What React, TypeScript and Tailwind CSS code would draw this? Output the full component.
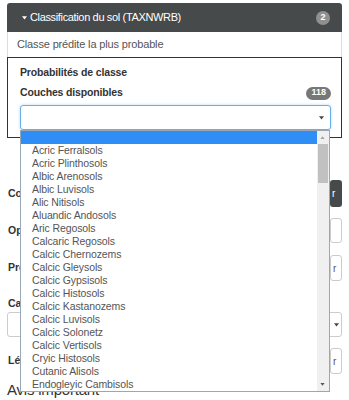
import React from "react";

const soils = [
  "",
  "Acric Ferralsols",
  "Acric Plinthosols",
  "Albic Arenosols",
  "Albic Luvisols",
  "Alic Nitisols",
  "Aluandic Andosols",
  "Aric Regosols",
  "Calcaric Regosols",
  "Calcic Chernozems",
  "Calcic Gleysols",
  "Calcic Gypsisols",
  "Calcic Histosols",
  "Calcic Kastanozems",
  "Calcic Luvisols",
  "Calcic Solonetz",
  "Calcic Vertisols",
  "Cryic Histosols",
  "Cutanic Alisols",
  "Endogleyic Cambisols",
];

const Caret: React.FC<{ className?: string }> = ({ className }) => (
  <svg width="7" height="5" viewBox="0 0 7 5" className={className}>
    <path d="M0 0 L7 0 L3.5 4.5 Z" fill="currentColor" />
  </svg>
);

const FieldBox: React.FC<{ children?: React.ReactNode; height: string }> = ({ children, height }) => (
  <div
    className={`w-[12px] ${height} border border-[#ccc] rounded-[3px] bg-white flex items-center text-[10px] text-[#555] overflow-hidden`}
  >
    {children}
  </div>
);

const App: React.FC = () => {
  return (
    <div className="relative w-[349px] h-[400px] overflow-hidden bg-white pt-[3px] px-[7px] font-['Liberation_Sans',Arial,sans-serif]">
      {/* panel header */}
      <div className="flex items-center h-[29px] bg-[#474a4a] rounded-t-[3px] pl-[15px] pr-[12px] text-white">
        <Caret className="text-white w-[5px] h-[4px] mr-[3px]" />
        <span className="text-[11px] tracking-[-0.35px]">Classification du sol (TAXNWRB)</span>
        <span className="ml-auto flex items-center justify-center w-[14px] h-[14px] rounded-full bg-[#8f9191] text-[9px] font-bold">
          2
        </span>
      </div>

      <div className="flex items-center h-[25px] border-x border-[#ddd] pl-[9px] text-[11px] tracking-[-0.15px] text-[#555]">
        Classe prédite la plus probable
      </div>

      {/* active layer box */}
      <div className="border border-[#333] pl-[12px] pr-[10px] pt-[7px] pb-[7px]">
        <div className="h-[14px] text-[10.5px] tracking-[-0.15px] font-bold text-[#333] leading-[14px]">
          Probabilités de classe
        </div>
        <div className="flex items-center justify-between mt-[7px] h-[14px]">
          <span className="text-[10.5px] tracking-[-0.15px] font-bold text-[#333]">Couches disponibles</span>
          <span className="flex items-center justify-center h-[13px] px-[5px] rounded-full bg-[#777] text-white text-[9px] font-bold">
            118
          </span>
        </div>
        <div className="mt-[5px] h-[25px] border border-[#66afe9] rounded-[3px] flex items-center justify-end pr-[6px] shadow-[0_0_3px_rgba(102,175,233,0.5)]">
          <Caret className="text-[#444] w-[5px] h-[4px]" />
        </div>
      </div>

      {/* form rows behind the dropdown */}
      <div className="flex items-center justify-between mt-[42px] h-[27px]">
        <span className="text-[10.5px] font-bold text-[#333] pl-[1px]">Couleur</span>
        <div className="w-[12px] h-[27px] bg-[#474a4a] rounded-[3px] text-white text-[10px] flex items-center pl-[2px]">r</div>
      </div>
      <div className="flex items-center justify-between mt-[11px]">
        <span className="text-[10.5px] font-bold text-[#333] pl-[1px]">Opacité</span>
        <FieldBox height="h-[25px]" />
      </div>
      <div className="flex items-center justify-between mt-[12px]">
        <span className="text-[10.5px] font-bold text-[#333] pl-[1px]">Profondeur</span>
        <FieldBox height="h-[26px]">
          <span className="pl-[2px]">r</span>
        </FieldBox>
      </div>
      <div className="mt-[15px] h-[15px] text-[10.5px] font-bold text-[#333] pl-[1px]">Catégorie</div>
      <div className="mt-[1px] h-[25px] border border-[#ccc] rounded-[3px] flex items-center justify-end pr-[2px]">
        <Caret className="text-[#444] w-[5px] h-[4px]" />
      </div>
      <div className="flex items-center justify-between mt-[11px]">
        <span className="text-[10.5px] font-bold text-[#333] pl-[1px]">Légende</span>
        <FieldBox height="h-[26px]">
          <span className="pl-[2px]">r</span>
        </FieldBox>
      </div>
      <div className="mt-[7px] text-[15px] tracking-[-0.2px] text-[#333] leading-[17px]">Avis important</div>

      {/* open native-like dropdown list */}
      <div className="absolute left-[20px] top-[130px] w-[310px] h-[262px] bg-white border border-[#9aa7b8] flex">
        <div className="flex-1">
          {soils.map((s, i) => (
            <div
              key={i}
              className={`h-[13px] leading-[13px] pl-[11px] text-[10.5px] tracking-[-0.1px] ${
                i === 0 ? "bg-[#2e8ef5] text-white" : "text-[#555]"
              }`}
            >
              {s}
            </div>
          ))}
        </div>
        <div className="relative w-[12px] bg-[#f0f0f0]">
          <Caret className="absolute left-[3px] top-[5px] w-[5px] h-[3px] rotate-180 text-[#a3a3a3]" />
          <div className="absolute left-[1px] top-[13px] w-[10px] h-[39px] bg-[#c1c1c1]" />
          <Caret className="absolute left-[3px] bottom-[5px] w-[5px] h-[3px] text-[#555]" />
        </div>
      </div>
    </div>
  );
};

export default App;
